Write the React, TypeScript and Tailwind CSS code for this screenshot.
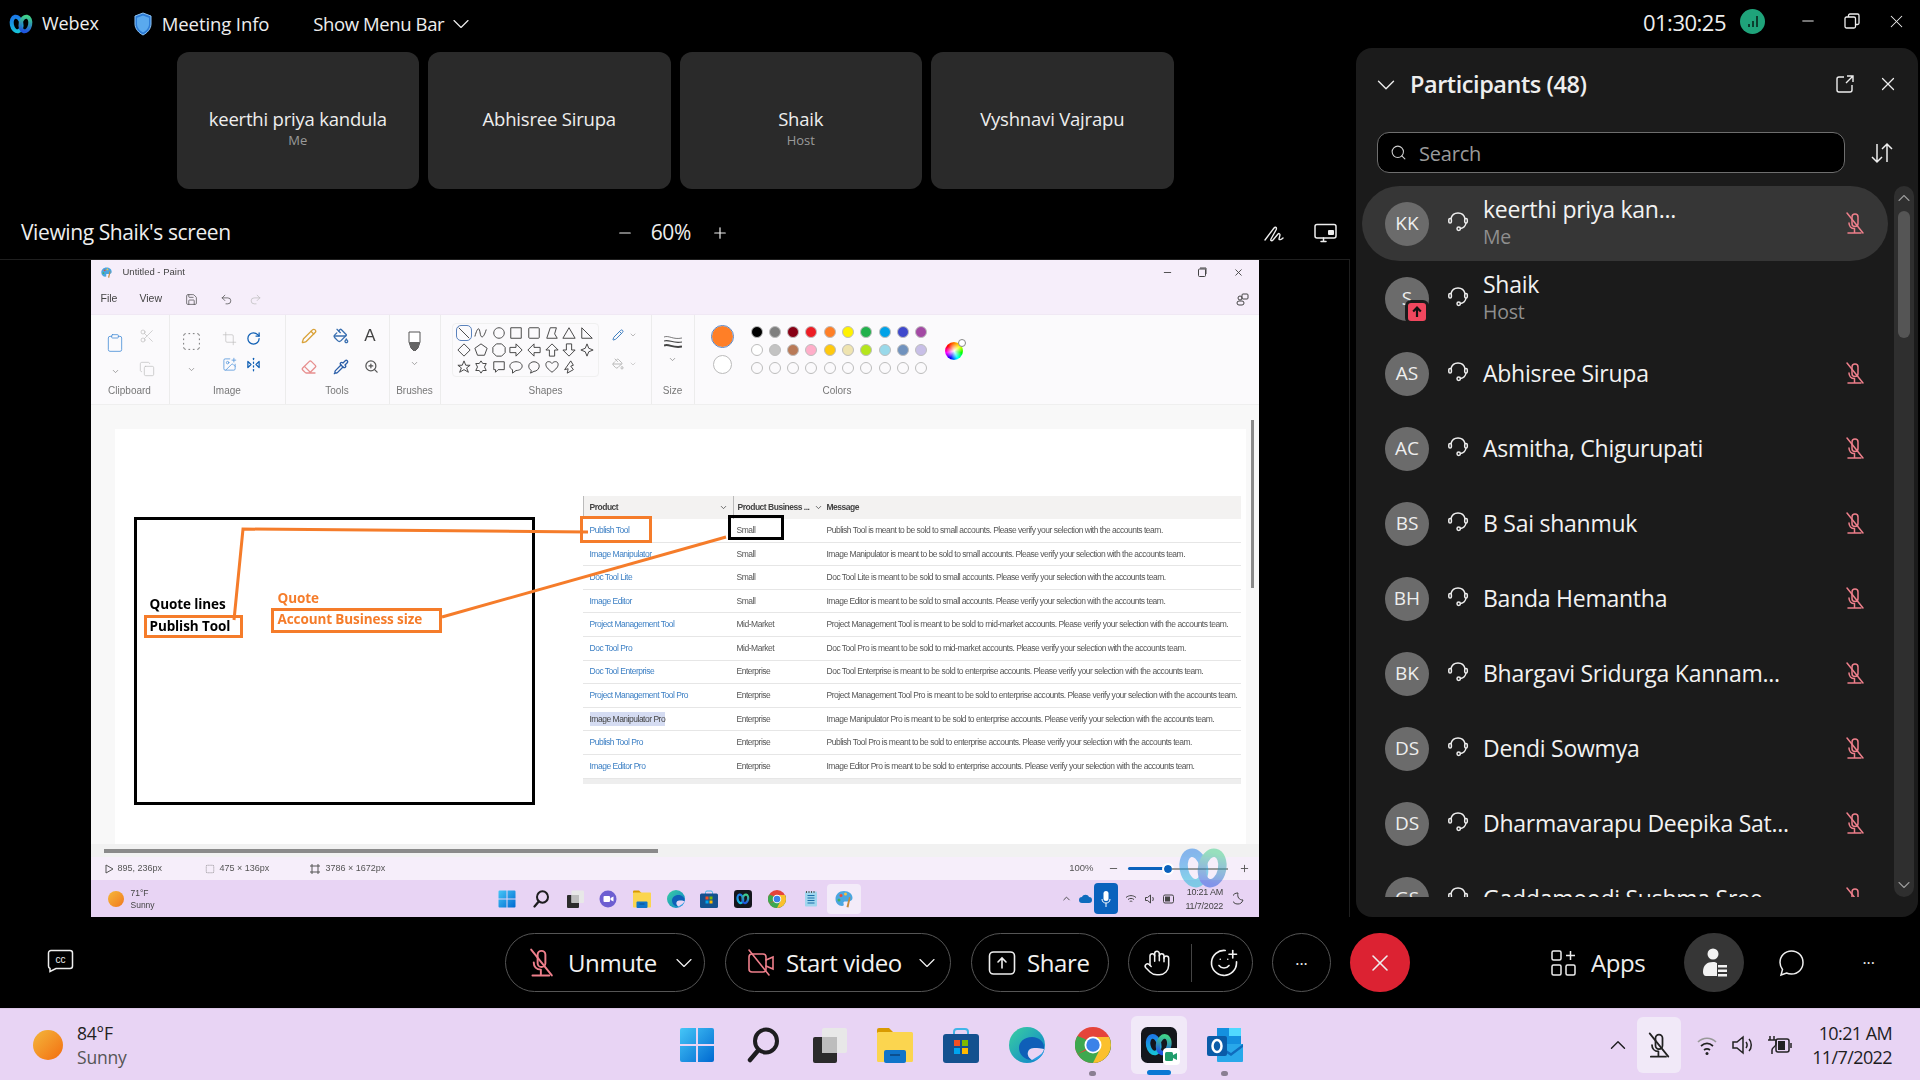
import { Clipboard, Copy, Crop, Eraser, Hand, PaintBucket, Pencil, Pipette, Redo2, Save, Scissors, SmilePlus, SquareDashed, Undo2, ZoomIn, ChevronDown, ChevronUp, X, Minus, Plus, Search, ImagePlus, RotateCw, FlipHorizontal2 } from "lucide-react";

const ui = "font-['Open_Sans','Noto_Sans',sans-serif]";
const paintFont = "font-['Liberation_Sans',Arial,sans-serif]";

function WebexLogo({ size = 20 }: { size?: number }) {
  return (
    <svg width={size} height={size} viewBox="0 0 24 20" fill="none">
      <defs>
        <linearGradient id="wxa" x1="0" y1="0" x2="0" y2="1">
          <stop offset="0" stopColor="#1c7be8" />
          <stop offset="1" stopColor="#16c0d8" />
        </linearGradient>
        <linearGradient id="wxb" x1="0" y1="0" x2="0" y2="1">
          <stop offset="0" stopColor="#3fd08a" />
          <stop offset="1" stopColor="#1f55e0" />
        </linearGradient>
      </defs>
      <ellipse cx="7.600" cy="10" rx="4.800" ry="7.400" transform="rotate(-12 7.600 10)" stroke="url(#wxa)" strokeWidth="4" />
      <ellipse cx="16.400" cy="10" rx="4.800" ry="7.400" transform="rotate(12 16.400 10)" stroke="url(#wxb)" strokeWidth="4" />
    </svg>
  );
}

function MicOffPink({ size = 24, color = "#ee7f8b" }: { size?: number; color?: string }) {
  return (
    <svg width={size} height={size} viewBox="0 0 24 24" fill="none" stroke={color} strokeWidth="1.500" strokeLinecap="round">
      <path d="M9 6a3 3 0 0 1 6 0v6.500a3 3 0 0 1-6 0z" />
      <path d="M4 2l16 20" />
      <path d="M6 12c0 3 2 5.500 5.500 5.500M11.500 17.500V21M5 22h13" />
    </svg>
  );
}

function Headset() {
  return (
    <svg width="24" height="24" viewBox="0 0 24 24" fill="none" stroke="#eeeeee" strokeWidth="1.500" strokeLinecap="round">
      <path d="M5 10.500a7.200 7.200 0 0 1 14 0" />
      <rect x="2.800" y="10.500" width="2.600" height="4.500" rx="1.300" />
      <rect x="18.700" y="10.500" width="2.600" height="4.500" rx="1.300" />
      <path d="M20 15c-.5 3-2.500 5-5.500 5.500" />
      <circle cx="12.700" cy="20.700" r="1.700" />
    </svg>
  );
}

function WinLogo({ size = 36 }: { size?: number }) {
  return (
    <svg width={size} height={size} viewBox="0 0 36 36">
      <defs>
        <linearGradient id="wn" x1="0" y1="0" x2="1" y2="1">
          <stop offset="0" stopColor="#45c6f7" />
          <stop offset="1" stopColor="#0069d1" />
        </linearGradient>
      </defs>
      <path d="M1 3a2 2 0 0 1 2-2h14v16H1zM19 1h14a2 2 0 0 1 2 2v14H19zM1 19h16v16H3a2 2 0 0 1-2-2zM19 19h16v14a2 2 0 0 1-2 2H19z" fill="url(#wn)" />
    </svg>
  );
}

function SearchGlass({ size = 36 }: { size?: number }) {
  return (
    <svg width={size} height={size} viewBox="0 0 36 36" fill="none" stroke="#1d1d1f" strokeLinecap="round">
      <ellipse cx="21" cy="14" rx="11" ry="11.500" strokeWidth="4" />
      <path d="M13.500 23L5 33" strokeWidth="4.500" />
    </svg>
  );
}

function TaskView({ size = 36 }: { size?: number }) {
  return (
    <svg width={size} height={size} viewBox="0 0 36 36">
      <rect x="2" y="10" width="24" height="26" rx="2" fill="#2b2b2b" />
      <rect x="11" y="1" width="25" height="25" rx="2" fill="#e8e8e8" />
      <rect x="11" y="10" width="15" height="16" fill="#bdbdbd" />
    </svg>
  );
}

function Files({ size = 36 }: { size?: number }) {
  return (
    <svg width={size} height={size} viewBox="0 0 36 36">
      <path d="M0 3a2 2 0 0 1 2-2h10l5 5h-17z" fill="#d99a00" />
      <rect y="5" width="36" height="30" rx="1.500" fill="#fbd54f" />
      <rect x="7" y="23" width="22" height="13" rx="2" fill="#0f74c9" />
      <rect x="13" y="27" width="10" height="2" fill="#0b4f8f" />
    </svg>
  );
}

function Store({ size = 36 }: { size?: number }) {
  return (
    <svg width={size} height={size} viewBox="0 0 36 36">
      <path d="M11 8V5a3 3 0 0 1 3-3h8a3 3 0 0 1 3 3v3" fill="none" stroke="#40b5e8" strokeWidth="2" />
      <rect y="7" width="36" height="29" rx="3" fill="#14518f" />
      <rect x="11" y="13" width="6" height="6" fill="#f25022" />
      <rect x="19" y="13" width="6" height="6" fill="#7fba00" />
      <rect x="11" y="21" width="6" height="6" fill="#00a4ef" />
      <rect x="19" y="21" width="6" height="6" fill="#ffb900" />
    </svg>
  );
}

function Edge({ size = 36 }: { size?: number }) {
  return (
    <svg width={size} height={size} viewBox="0 0 36 36">
      <defs>
        <linearGradient id="ed" x1="0" y1="0" x2="1" y2="1">
          <stop offset="0" stopColor="#3ad0a0" />
          <stop offset="1" stopColor="#0c7fd0" />
        </linearGradient>
      </defs>
      <circle cx="18" cy="18" r="18" fill="url(#ed)" />
      <path d="M35 22c1-7-5-12-12-12-8 0-13 5-13 11 0 6 5 12 13 12-3-2-5-5-4-8 1-4 5-4 9-4 3 0 5 1 7 1z" fill="#0f5fb8" />
      <path d="M35 22c-2 0-4-1-7-1-4 0-8 0-9 4-1 3 1 6 4 8 5 0 10-4 12-11z" fill="#e8d4f4" />
      <path d="M23 33c5 1 10-3 12-9-3 4-8 6-12 9z" fill="#2a9ee3" />
    </svg>
  );
}

function Chrome({ size = 36 }: { size?: number }) {
  return (
    <svg width={size} height={size} viewBox="0 0 36 36">
      <circle cx="18" cy="18" r="18" fill="#e5443a" />
      <path d="M18 18L2.400 27A18 18 0 0 1 2.400 9L10 12z" fill="#3ea84f" />
      <path d="M2.400 27L10 24l8-6 8 0 8.200-8A18 18 0 0 1 18 36 18 18 0 0 1 2.400 27z" fill="#3ea84f" />
      <path d="M18 36a18 18 0 0 0 16-26H18l8 10z" fill="#fbc02d" />
      <circle cx="18" cy="18" r="8.500" fill="#fff" />
      <circle cx="18" cy="18" r="6.700" fill="#3b82e8" />
    </svg>
  );
}

function WebexTile({ size = 36 }: { size?: number }) {
  return (
    <div className="flex items-center justify-center rounded-[18%] bg-[#14161c]" style={{ width: size, height: size }}>
      <WebexLogo size={size * 0.76} />
    </div>
  );
}

function Outlook({ size = 36 }: { size?: number }) {
  return (
    <svg width={size} height={size} viewBox="0 0 36 36">
      <rect x="10" y="1" width="24" height="16" fill="#1490df" />
      <rect x="22" y="1" width="12" height="8" fill="#50d9ff" />
      <path d="M10 17h26v17a1 1 0 0 1-1 1H11a1 1 0 0 1-1-1z" fill="#28a8ea" />
      <path d="M10 17l14 9 12-9v3L24 29 10 20z" fill="#0f6cbd" />
      <rect y="9" width="20" height="20" rx="2" fill="#0a5ca8" />
      <ellipse cx="10" cy="19" rx="4.500" ry="6" fill="none" stroke="#fff" strokeWidth="2.500" />
    </svg>
  );
}

function Notepad({ size = 36 }: { size?: number }) {
  return (
    <svg width={size} height={size} viewBox="0 0 36 36">
      <rect x="6" y="3" width="24" height="30" rx="2" fill="#9fd6ee" />
      <path d="M11 11h14M11 16h14M11 21h14M11 26h14" stroke="#1a6fa8" strokeWidth="2" />
      <path d="M9 2v4M14 2v4M19 2v4M24 2v4" stroke="#555" strokeWidth="2" />
    </svg>
  );
}

function PaintIcon({ size = 36 }: { size?: number }) {
  return (
    <svg width={size} height={size} viewBox="0 0 36 36">
      <path d="M18 2C8 2 1 9 1 18c0 8 6 14 13 14 4 0 4-3 3-5-1-3 1-4 4-4h5c5 0 9-3 9-7C35 8 28 2 18 2z" fill="#4aa6e0" />
      <circle cx="12" cy="11" r="3" fill="#e94c3d" />
      <circle cx="21" cy="8" r="3" fill="#f5c242" />
      <circle cx="8" cy="20" r="3" fill="#43b05c" />
      <path d="M28 14l-5 20 4 1 4-20z" fill="#c58a3d" />
    </svg>
  );
}

function TeamsChat({ size = 36 }: { size?: number }) {
  return (
    <svg width={size} height={size} viewBox="0 0 36 36">
      <circle cx="18" cy="18" r="17" fill="#6d5ed1" />
      <rect x="9" y="12" width="13" height="12" rx="2" fill="#fff" />
      <path d="M23 16l6-3v10l-6-3z" fill="#fff" />
    </svg>
  );
}

function TopBar() {
  return (
    <div className="flex h-[48px] items-center text-[#eeeeee]">
      <div className="ml-[9px]"><WebexLogo size={24} /></div>
      <span className="ml-[9px] mt-[-2px] text-[18px] tracking-[-0.1px]">Webex</span>
      <svg className="ml-[35px]" width="18" height="24" viewBox="0 0 18 24">
        <path d="M9 1l8 3v8c0 5-4 9-8 11-4-2-8-6-8-11V4z" fill="#2c7bd6" stroke="#8cc4f5" strokeWidth="1" />
        <path d="M9 3.500l6 2.200v6.300c0 4-3 7-6 8.500-3-1.500-6-4.500-6-8.500V5.700z" fill="#5aa9ee" />
      </svg>
      <span className="ml-[10px] text-[18.500px] tracking-[-0.1px]">Meeting Info</span>
      <span className="ml-[44px] text-[18.500px] tracking-[-0.4px]">Show Menu Bar</span>
      <ChevronDown className="ml-[3px]" size={28} strokeWidth={1} />
      <span className="ml-auto mt-[-3px] text-[22px] tracking-[-0.5px]">01:30:25</span>
      <div className="ml-[14px] mt-[-6px] flex h-[25px] w-[25px] items-end justify-center gap-[2px] rounded-full bg-[#1fa37a] pb-[7px]">
        <span className="h-[3px] w-[2px] bg-[#0b3d2e]" />
        <span className="h-[6px] w-[2px] bg-[#0b3d2e]" />
        <span className="h-[11px] w-[2px] bg-[#0b3d2e]" />
      </div>
      <Minus className="ml-[34px] mt-[-6px]" size={18} strokeWidth={1.300} />
      <svg className="ml-[27px] mt-[-6px]" width="16" height="16" viewBox="0 0 16 16" fill="none" stroke="#eeeeee" strokeWidth="1.300">
        <rect x="1" y="4" width="10.500" height="11" rx="1.500" />
        <path d="M4.500 4V2.500A1.500 1.500 0 0 1 6 1h7.500A1.500 1.500 0 0 1 15 2.500V10a1.500 1.500 0 0 1-1.500 1.500h-2" />
      </svg>
      <X className="ml-[26px] mr-[13px] mt-[-6px]" size={21} strokeWidth={1.200} />
    </div>
  );
}

function Tile({ name, sub }: { name: string; sub?: string }) {
  return (
    <div className="flex h-[137px] w-[242.500px] flex-col items-center rounded-xl bg-[#2a2a2a] pt-[55px]">
      <div className="text-[18.500px] leading-[24px] tracking-[-0.2px] text-[#eeeeee]">{name}</div>
      {sub && <div className="text-[13px] leading-[18px] text-[#9a9a9a]">{sub}</div>}
    </div>
  );
}

function ViewingRow() {
  return (
    <div className="flex h-[70px] items-center pt-[18px] text-[#eeeeee]">
      <span className="ml-[21px] text-[21px] tracking-[-0.4px]">Viewing Shaik's screen</span>
      <Minus className="ml-[385px]" size={18} strokeWidth={1.600} />
      <span className="ml-[17px] text-[21px] tracking-[-0.4px]">60%</span>
      <Plus className="ml-[20px]" size={18} strokeWidth={1.600} />
      <svg className="ml-[535px]" width="22" height="18" viewBox="0 0 22 18" fill="none" stroke="#eeeeee" strokeWidth="1.400" strokeLinecap="round">
        <path d="M1 16L10 4c2-2 3 0 2 2l-5 9c-1 2 1 2 2 1l5-6c1-1 2 0 2 1l-1 4c0 1 2 1 4-1" />
      </svg>
      <svg className="ml-[28px]" width="24" height="20" viewBox="0 0 24 20" fill="none" stroke="#eeeeee" strokeWidth="1.500" strokeLinecap="round">
        <rect x="1" y="1.500" width="21" height="13.500" rx="2" />
        <path d="M7 18.500h5M9.500 15v3" />
        <rect x="14" y="7" width="6" height="5" fill="#eeeeee" stroke="none" rx="1" />
      </svg>
    </div>
  );
}

const tableRows = [
  ["Publish Tool", "Small", "Publish Tool is meant to be sold to small accounts. Please verify your selection with the accounts team."],
  ["Image Manipulator", "Small", "Image Manipulator is meant to be sold to small accounts. Please verify your selection with the accounts team."],
  ["Doc Tool Lite", "Small", "Doc Tool Lite is meant to be sold to small accounts. Please verify your selection with the accounts team."],
  ["Image Editor", "Small", "Image Editor is meant to be sold to small accounts. Please verify your selection with the accounts team."],
  ["Project Management Tool", "Mid-Market", "Project Management Tool is meant to be sold to mid-market accounts. Please verify your selection with the accounts team."],
  ["Doc Tool Pro", "Mid-Market", "Doc Tool Pro is meant to be sold to mid-market accounts. Please verify your selection with the accounts team."],
  ["Doc Tool Enterprise", "Enterprise", "Doc Tool Enterprise is meant to be sold to enterprise accounts. Please verify your selection with the accounts team."],
  ["Project Management Tool Pro", "Enterprise", "Project Management Tool Pro is meant to be sold to enterprise accounts. Please verify your selection with the accounts team."],
  ["Image Manipulator Pro", "Enterprise", "Image Manipulator Pro is meant to be sold to enterprise accounts. Please verify your selection with the accounts team."],
  ["Publish Tool Pro", "Enterprise", "Publish Tool Pro is meant to be sold to enterprise accounts. Please verify your selection with the accounts team."],
  ["Image Editor Pro", "Enterprise", "Image Editor Pro is meant to be sold to enterprise accounts. Please verify your selection with the accounts team."],
];

function PasteTable() {
  return (
    <div className="ml-[48px] mt-[67px] w-[658px] shrink-0 text-[8.500px] tracking-[-0.49px] text-[#555]">
      <div className="flex h-[23px] items-center whitespace-nowrap bg-[#f3f2f1] font-bold text-[#444]">
        <div className="flex h-full w-[150px] shrink-0 items-center justify-between border-l border-[#bbb] pl-[6px] pr-[5px]">
          Product <ChevronDown size={9} />
        </div>
        <div className="flex h-full w-[94px] shrink-0 items-center border-l border-[#bbb] pl-[4px]">
          Product Business ... <ChevronDown className="ml-[5px]" size={9} />
        </div>
        <div>Message</div>
      </div>
      {tableRows.map(([p, s, m]) => (
        <div key={p} className="flex h-[23.600px] items-center whitespace-nowrap border-b border-[#e6e6e6]">
          <div className="w-[150px] shrink-0 pl-[7px]">
            <span className={p === "Image Manipulator Pro" ? "bg-[#d5dcf2] py-[2px] text-[#444]" : "text-[#3b7fc4]"}>{p}</span>
          </div>
          <div className="w-[94px] shrink-0 pl-[4px]">{s}</div>
          <div>{m}</div>
        </div>
      ))}
      <div className="h-[5px] bg-[#eeeeee]" />
    </div>
  );
}

function Annotations() {
  const f = "font-['Open_Sans',sans-serif] text-[13.500px] font-bold tracking-[-0.1px]";
  return (
    <>
      <div className={`absolute left-[35px] top-[167px] leading-[16px] text-black ${f}`}>Quote lines</div>
      <div className={`absolute left-[29px] top-[186px] h-[23px] w-[99px] border-[3px] border-[#f57c2a] pl-[3px] leading-[17px] text-black ${f}`}>Publish Tool</div>
      <div className={`absolute left-[163px] top-[161px] leading-[16px] text-[#f57c2a] ${f}`}>Quote</div>
      <div className={`absolute left-[156px] top-[179px] h-[25px] w-[171px] border-[3px] border-[#f57c2a] pl-[4px] leading-[16px] text-[#f57c2a] ${f}`}>Account Business size</div>
      <div className="absolute left-[465px] top-[87px] h-[27px] w-[72px] border-[3px] border-[#f57c2a]" />
      <div className="absolute left-[613px] top-[86px] h-[25px] w-[56px] border-[3px] border-black" />
      <svg className="absolute inset-0 h-full w-full" fill="none" stroke="#f57c2a" strokeWidth="3">
        <path d="M119 191L128 100L473 103" />
        <path d="M327 188L611 108" />
      </svg>
    </>
  );
}

function Group({ label, width, children }: { label: string; width: number; children: React.ReactNode }) {
  return (
    <div className="relative h-full shrink-0 border-r border-[#ececec]" style={{ width }}>
      {children}
      <div className="absolute bottom-[6px] left-0 right-0 text-center text-[10px] text-[#777]">{label}</div>
    </div>
  );
}

const shapeIcons = [
  "M2 2L14 14", "M1 12C4 1 6 1 7 8s4 6 7-4", "M8 2a6 6 0 1 0 .01 0z", "M2 2h12v12H2z", "M3 2h10a1 1 0 0 1 1 1v10a1 1 0 0 1-1 1H3a1 1 0 0 1-1-1V3a1 1 0 0 1 1-1z", "M6 2h7l-2 7 3 5H2z", "M8 2l7 12H1z", "M2 2l12 12H2z",
  "M8 1l7 7-7 7-7-7z", "M8 1l7 5-3 8H4L1 6z", "M5 1h6l4 4v6l-4 4H5l-4-4V5z", "M1 5h7V1l7 7-7 7v-4H1z", "M15 5H8V1L1 8l7 7v-4h7z", "M5 15V8H1l7-7 7 7h-4v7z", "M5 1v7H1l7 7 7-7h-4V1z", "M8 1l2 5 5 2-5 2-2 5-2-5-5-2 5-2z",
  "M8 1l2 5h5l-4 3 2 5-5-3-5 3 2-5-4-3h5z", "M8 1l2 3h4l-2 4 2 4h-4l-2 3-2-3H2l2-4-2-4h4z", "M2 2h12v9H7l-3 3v-3H2z", "M8 2c4 0 7 2 7 5s-3 5-7 5l-4 3v-4C2 10 1 9 1 7c0-3 3-5 7-5z", "M8 2c3 0 6 2 6 5s-3 6-6 6l-4 2 1-3C3 11 2 9 2 7c0-3 3-5 6-5z", "M8 14C3 10 1 8 1 5c0-4 5-4 7-1 2-3 7-3 7 1 0 3-2 5-7 9z", "M10 1l3 5-3 1 3 4-7 4 1-5-4 1z",
];

const colorRows = [
  ["#000000", "#7f7f7f", "#880015", "#ed1c24", "#ff7f27", "#fff200", "#22b14c", "#00a2e8", "#3f48cc", "#a349a4"],
  ["#ffffff", "#c3c3c3", "#b97a57", "#ffaec9", "#ffc90e", "#efe4b0", "#b5e61d", "#99d9ea", "#7092be", "#c8bfe7"],
  ["#fbfafc", "#fbfafc", "#fbfafc", "#fbfafc", "#fbfafc", "#fbfafc", "#fbfafc", "#fbfafc", "#fbfafc", "#fbfafc"],
];

function Ribbon() {
  const ic = "text-[#555]";
  const dim = "text-[#b9b9b9]";
  return (
    <div className={`flex h-[90px] items-stretch border-b border-[#efefef] bg-[#fbfafc] ${paintFont}`}>
      <Group label="Clipboard" width={79}>
        <div className="grid grid-cols-2 gap-y-[14px] pl-[14px] pt-[13px]">
          <Clipboard className="mt-[5px] text-[#4a90d9]" size={20} strokeWidth={1} />
          <Scissors className={`ml-[2px] ${dim}`} size={16} strokeWidth={1} />
          <ChevronDown className="ml-[6px] text-[#888]" size={9} />
          <Copy className={`-mt-[6px] ml-[2px] ${dim}`} size={16} strokeWidth={1} />
        </div>
      </Group>
      <Group label="Image" width={116}>
        <div className="grid grid-cols-3 gap-y-[11px] pl-[11px] pt-[16px]">
          <SquareDashed className="text-[#666]" size={21} strokeWidth={1} />
          <Crop className={`ml-[7px] ${dim}`} size={15} strokeWidth={1} />
          <RotateCw className="ml-[-4px] text-[#0f5fb4]" size={15} />
          <ChevronDown className="ml-[6px] mt-[2px] text-[#888]" size={9} />
          <ImagePlus className="ml-[7px] -mt-[6px] text-[#4a90d9]" size={15} strokeWidth={1.200} />
          <FlipHorizontal2 className="ml-[-4px] -mt-[6px] text-[#0f5fb4]" size={15} />
        </div>
      </Group>
      <Group label="Tools" width={104}>
        <div className="grid grid-cols-3 gap-y-[15px] pl-[15px] pt-[13px]">
          <Pencil className="text-[#d9a23a]" size={16} />
          <PaintBucket className="ml-[3px] text-[#3a6fb0]" size={16} />
          <span className="ml-[5px] text-[17px] leading-[16px] text-[#444]">A</span>
          <Eraser className="text-[#e78f8f]" size={16} />
          <Pipette className="ml-[3px] text-[#2b5ea8]" size={16} />
          <ZoomIn className={`ml-[5px] ${ic}`} size={15} />
        </div>
      </Group>
      <Group label="Brushes" width={51}>
        <div className="flex flex-col items-center pt-[16px]">
          <svg width="13" height="20" viewBox="0 0 13 20">
            <path d="M1 1h11v10l-2 6-3 3H6l-3-3-2-6z" fill="#fff" stroke="#555" />
            <path d="M1 11h11l-2 6-3 3H6l-3-3z" fill="#666" />
          </svg>
          <ChevronDown className="mt-[8px] text-[#888]" size={9} />
        </div>
      </Group>
      <Group label="Shapes" width={211}>
        <div className="ml-[11px] mt-[8px] flex w-[195px]">
          <div className="grid h-[54px] w-[147px] grid-cols-8 content-center gap-y-[3px] rounded border border-[#f0f0f0] pl-[4px]">
            {shapeIcons.map((d, i) => (
              <svg key={i} width="14" height="14" viewBox="0 0 16 16" fill="none" stroke="#444" strokeWidth="1.100" className={i === 0 ? "rounded-sm outline outline-1 outline-[#5b83bd]" : ""}>
                <path d={d} />
              </svg>
            ))}
          </div>
          <div className="ml-[13px] mt-[6px] flex flex-col gap-[17px]">
            <div className="flex items-center gap-[5px]"><Pencil className="text-[#3f7fc0]" size={12} /><ChevronDown className="text-[#999]" size={8} /></div>
            <div className="flex items-center gap-[5px]"><PaintBucket className={dim} size={12} /><ChevronDown className="text-[#bbb]" size={8} /></div>
          </div>
        </div>
      </Group>
      <Group label="Size" width={43}>
        <div className="flex flex-col items-center pt-[20px]">
          <svg width="18" height="14" viewBox="0 0 18 14" fill="none" stroke="#444">
            <path d="M0 2c5-2 9 3 18 1" strokeWidth=".7" />
            <path d="M0 6c5-2 9 3 18 1" strokeWidth="1.100" />
            <path d="M0 10.500c5-2 9 3 18 1" strokeWidth="2" />
          </svg>
          <ChevronDown className="mt-[6px] text-[#888]" size={9} />
        </div>
      </Group>
      <div className="relative w-[564px]">
        <div className="absolute bottom-[6px] left-[128px] text-[10px] text-[#777]">Colors</div>
        <div className="flex pt-[11px]">
          <div className="ml-[17px] flex flex-col items-center">
            <span className="h-[21px] w-[21px] rounded-full border-2 border-[#ff7f27] bg-[#ff7f27] outline outline-1 outline-[#5b83bd]" />
            <span className="mt-[8px] h-[19px] w-[19px] rounded-full border border-[#bbb] bg-white" />
          </div>
          <div className="ml-[18px] flex flex-col gap-[6px]">
            {colorRows.map((row, r) => (
              <div key={r} className="flex gap-[6.300px]">
                {row.map((c, i) => (
                  <span key={i} className="h-[12px] w-[12px] rounded-full border border-[#bdbdbd]" style={{ backgroundColor: c }} />
                ))}
              </div>
            ))}
          </div>
          <span className="relative ml-[18px] mt-[16px] h-[18px] w-[18px] rounded-full bg-[radial-gradient(circle,#ffffff_0%,#ffffff00_60%),conic-gradient(#ff7f00,#ffff00,#00ff00,#00ffff,#0000ff,#ff00ff,#ff0000,#ff7f00)]">
            <span className="absolute right-[-3px] top-[-3px] h-[8px] w-[8px] rounded-full border border-[#888] bg-white" />
          </span>
        </div>
      </div>
    </div>
  );
}

function MiniTaskbar() {
  const icons = [WinLogo, SearchGlass, TaskView, TeamsChat, Files, Edge, Store, WebexTile, Chrome, Notepad, PaintIcon];
  return (
    <div className={`flex h-[37px] items-center bg-[#e8d4f4] ${paintFont}`}>
      <div className="ml-[17px] h-[16px] w-[16px] shrink-0 rounded-full bg-gradient-to-br from-[#f5b83a] to-[#f0781e]" />
      <div className="ml-[7px] w-[360px] shrink-0 text-[8.500px] leading-[12px] text-[#444]">
        <div>71°F</div>
        <div>Sunny</div>
      </div>
      {icons.map((Icon, i) => (
        <div key={i} className={`flex h-[30px] w-[33.700px] shrink-0 items-center justify-center rounded-sm ${i === 10 ? "bg-[#f3ebf9]" : ""}`}>
          <Icon size={18} />
        </div>
      ))}
      <div className="ml-[200px] flex shrink-0 items-center text-[#444]">
        <ChevronUp size={11} />
        <svg className="ml-[7px]" width="13" height="9" viewBox="0 0 13 9"><path d="M3 9a3 3 0 0 1 0-6c1-3 6-3 7 0a3 3 0 0 1 0 6z" fill="#0f6cbd" /></svg>
        <div className="ml-[2px] flex h-[31px] w-[24px] items-center justify-center rounded-sm bg-[#0a62bd]">
          <svg width="10" height="16" viewBox="0 0 10 16"><rect x="2.500" width="5" height="10" rx="2.500" fill="#fff" /><path d="M1 8c0 3 2 4 4 4s4-1 4-4M5 12v4" stroke="#fff" fill="none" /></svg>
        </div>
      </div>
      <div className="ml-[7px] flex shrink-0 items-center gap-[7px] text-[#444]">
        <svg width="12" height="12" viewBox="0 0 24 24" fill="none" stroke="#444" strokeWidth="2"><path d="M2 9c6-5 14-5 20 0M6 13c4-3 8-3 12 0M9.500 17c2-1 3-1 5 0" /></svg>
        <svg width="12" height="12" viewBox="0 0 24 24" fill="none" stroke="#444" strokeWidth="2"><path d="M3 9h4l6-5v16l-6-5H3zM17 8c2 2 2 6 0 8" /></svg>
        <svg width="13" height="10" viewBox="0 0 13 10"><rect x=".5" y="1" width="10" height="8" rx="1.500" fill="none" stroke="#444" /><rect x="2" y="2.500" width="5" height="5" fill="#444" /></svg>
      </div>
      <div className="ml-[5px] w-[42px] shrink-0 whitespace-nowrap text-right text-[9px] leading-[14px] tracking-[-0.2px] text-[#444]">
        <div>10:21 AM</div>
        <div>11/7/2022</div>
      </div>
      <svg className="ml-[10px] shrink-0" width="11" height="13" viewBox="0 0 11 13" fill="none" stroke="#444"><path d="M5 1c-1 4 1 7 5 7-1 3-3 4-5 4a5 5 0 0 1-1-11z" /></svg>
    </div>
  );
}

function PaintWindow() {
  return (
    <div className={`h-[657px] w-[1168px] overflow-hidden bg-white blur-[0.35px] ${paintFont}`}>
      <div className="flex h-[24px] items-center bg-[#f6eefa] text-[#444]">
        <div className="ml-[10px]"><PaintIcon size={11} /></div>
        <span className="ml-[11px] text-[9.500px]">Untitled - Paint</span>
        <Minus className="ml-auto" size={11} />
        <svg className="ml-[25px]" width="9" height="10" viewBox="0 0 9 10" fill="none" stroke="#444"><rect x=".5" y="2" width="7" height="7.500" rx="1" /><path d="M2 1h6v6" /></svg>
        <X className="ml-[26px] mr-[15px]" size={11} />
      </div>
      <div className="flex h-[31px] items-center border-b border-[#f0e8f4] bg-[#f6eefa] text-[10.500px] text-[#444]">
        <span className="ml-[10px]">File</span>
        <span className="ml-[22px]">View</span>
        <Save className="ml-[23px]" size={13} strokeWidth={1.300} />
        <Undo2 className="ml-[22px]" size={13} strokeWidth={1.300} />
        <Redo2 className="ml-[16px] text-[#bbb]" size={13} strokeWidth={1.300} />
        <svg className="ml-auto mr-[10px]" width="13" height="13" viewBox="0 0 13 13" fill="none" stroke="#444"><rect x="6" y="1" width="6" height="5" rx="1" /><circle cx="4" cy="5" r="2" /><rect x="1" y="8" width="7" height="4" rx="2" /></svg>
      </div>
      <Ribbon />
      <div className="flex h-[439px] bg-[#f8f8f8] pl-[24px] pt-[24px]">
        <div className="relative flex h-[415px] w-[1131px] bg-white">
          <div className="ml-[19px] mt-[88px] h-[288px] w-[401px] shrink-0 border-[3px] border-black" />
          <PasteTable />
          <Annotations />
        </div>
        <div className="ml-[5px] mt-[-9px] h-[168px] w-[3px] bg-[#8a8a8a]" />
      </div>
      <div className="flex h-[13px] items-center bg-[#f1f1f1] pl-[13px]">
        <div className="h-[4px] w-[554px] bg-[#8a8a8a]" />
      </div>
      <div className="relative flex h-[23px] items-center bg-[#f6eefa] text-[9px] text-[#555]">
        <svg className="ml-[14px]" width="9" height="10" viewBox="0 0 9 10" fill="none" stroke="#555"><path d="M1 1v8l7-4z" /></svg>
        <span className="ml-[4px] w-[79px]">895, 236px</span>
        <SquareDashed className="ml-[8px]" size={10} strokeWidth={1.300} />
        <span className="ml-[5px] w-[82px]">475 × 136px</span>
        <svg className="ml-[8px]" width="10" height="10" viewBox="0 0 10 10" fill="none" stroke="#555"><path d="M2 0v10M8 0v10M0 2h10M0 8h10" /></svg>
        <span className="ml-[6px]">3786 × 1672px</span>
        <span className="ml-auto text-[9.500px]">100%</span>
        <Minus className="ml-[14px]" size={11} />
        <div className="ml-[9px] flex w-[100px] items-center">
          <span className="h-[3px] w-[36px] rounded-l bg-[#0a62bd]" />
          <span className="h-[8px] w-[8px] rounded-full bg-[#0a62bd] outline outline-2 outline-white" />
          <span className="h-[2px] w-[56px] bg-[#999]" />
        </div>
        <Plus className="ml-[11px] mr-[9px]" size={11} />
        <div className="absolute left-[1087px] top-[-14px] opacity-50"><WebexLogo size={50} /></div>
      </div>
      <MiniTaskbar />
    </div>
  );
}

const people = [
  { i: "KK", n: "keerthi priya kan...", s: "Me", on: true },
  { i: "S", n: "Shaik", s: "Host", host: true },
  { i: "AS", n: "Abhisree Sirupa" },
  { i: "AC", n: "Asmitha, Chigurupati" },
  { i: "BS", n: "B Sai shanmuk" },
  { i: "BH", n: "Banda Hemantha" },
  { i: "BK", n: "Bhargavi Sridurga Kannam..." },
  { i: "DS", n: "Dendi Sowmya" },
  { i: "DS", n: "Dharmavarapu Deepika Sat..." },
  { i: "GS", n: "Gaddamoodi Sushma Sree..." },
];

function ParticipantRow({ p }: { p: (typeof people)[number] }) {
  return (
    <div className={`flex h-[75px] shrink-0 items-center rounded-full pl-[23px] ${p.on ? "bg-[#363636]" : ""}`}>
      <div className="relative flex h-[44px] w-[44px] shrink-0 items-center justify-center rounded-full bg-[#6b6b6b] text-[19px] text-[#eeeeee]">
        {p.i}
        {p.host && (
          <span className="absolute bottom-[-3px] right-0 flex h-[24px] w-[24px] items-center justify-center rounded-md border-[3px] border-[#1b1b1b] bg-[#f0475e]">
            <svg width="12" height="12" viewBox="0 0 11 11" fill="none" stroke="#111" strokeWidth="2"><path d="M5.500 10V2M2 5l3.500-3.500L9 5" /></svg>
          </span>
        )}
      </div>
      <div className="ml-[17px] mt-[-8px] shrink-0"><Headset /></div>
      <div className={`ml-[13px] flex-1 ${p.s ? "mt-[-3px]" : "mt-[-1px]"}`}>
        <div className="text-[23px] leading-[30px] tracking-[-0.25px] text-[#f2f2f2]">{p.n}</div>
        {p.s && <div className="text-[19.500px] leading-[26px] tracking-[-0.2px] text-[#8f8f8f]">{p.s}</div>}
      </div>
      {!p.host && <div className="mr-[21px] mt-[-2px]"><MicOffPink /></div>}
    </div>
  );
}

function ParticipantsPanel() {
  return (
    <div className="ml-[6px] flex h-[869px] w-[562px] flex-col rounded-2xl bg-[#1b1b1b]">
      <div className="flex h-[74px] shrink-0 items-center text-[#eeeeee]">
        <ChevronDown className="ml-[15px]" size={30} strokeWidth={1.100} />
        <span className="ml-[9px] text-[23.500px] font-semibold tracking-[-0.45px]">Participants (48)</span>
        <svg className="ml-auto mt-[-3px]" width="20" height="20" viewBox="0 0 20 20" fill="none" stroke="#eeeeee" strokeWidth="1.400">
          <path d="M9 3H4a2 2 0 0 0-2 2v11a2 2 0 0 0 2 2h11a2 2 0 0 0 2-2v-5M12 2h6v6M18 2l-7 7" />
        </svg>
        <X className="ml-[22px] mr-[19px] mt-[-3px]" size={22} strokeWidth={1.300} />
      </div>
      <div className="flex shrink-0 items-center pl-[21px]">
        <div className="mt-[10px] flex h-[41px] w-[468px] items-center rounded-xl border border-[#6e6e6e] bg-black">
          <Search className="ml-[12px] text-[#cfcfcf]" size={17} strokeWidth={1.500} />
          <span className="ml-[12px] pt-[3px] text-[20px] tracking-[-0.2px] text-[#9a9a9a]">Search</span>
        </div>
        <svg className="ml-[25px] mt-[10px]" width="24" height="22" viewBox="0 0 24 22" fill="none" stroke="#eeeeee" strokeWidth="1.500">
          <path d="M7 2v18M2 15l5 5 5-5M17 20V2M12 7l5-5 5 5" />
        </svg>
      </div>
      <div className="mt-[13px] flex min-h-0 flex-1 pl-[6px]">
        <div className="h-[711px] w-[526px] overflow-hidden">
          {people.map((p, i) => <ParticipantRow key={i} p={p} />)}
        </div>
        <div className="ml-[6px] flex h-[711px] w-[20px] flex-col items-center rounded-full bg-[#2f2f2f] text-[#9a9a9a]">
          <ChevronUp className="mt-[2px] shrink-0" size={20} strokeWidth={1.300} />
          <div className="mt-[3px] h-[127px] w-[12px] shrink-0 rounded-full bg-[#555555]" />
          <ChevronDown className="mb-[2px] mt-auto shrink-0" size={20} strokeWidth={1.300} />
        </div>
      </div>
    </div>
  );
}

function Caret() {
  return <ChevronDown size={28} strokeWidth={1} />;
}

function Toolbar() {
  const pill = "flex h-[59px] shrink-0 items-center rounded-full border border-[#555] text-[#f2f2f2]";
  const label = "text-[24px] font-medium tracking-[-0.4px]";
  return (
    <div className="flex h-[91px] items-center text-[#eeeeee]">
      <svg className="ml-[47px] mt-[-4px]" width="27" height="24" viewBox="0 0 27 24" fill="none" stroke="#eeeeee" strokeWidth="1.500">
        <path d="M4 1.500h19a2.500 2.500 0 0 1 2.500 2.500v13a2.500 2.500 0 0 1-2.500 2.500H9l-6 3v-3.100A2.500 2.500 0 0 1 1.500 17V4A2.500 2.500 0 0 1 4 1.500z" />
        <text x="13.500" y="14" textAnchor="middle" fontSize="10" fill="#eeeeee" stroke="none" fontFamily="Liberation Sans">cc</text>
      </svg>
      <div className={`${pill} ml-[431px] w-[200px] pl-[20px]`}>
        <MicOffPink size={31} />
        <span className={`${label} ml-[11px]`}>Unmute</span>
        <span className="ml-[13px]"><Caret /></span>
      </div>
      <div className={`${pill} ml-[20px] w-[226px] pl-[20px]`}>
        <svg width="31" height="31" viewBox="0 0 31 31" fill="none" stroke="#ee7f8b" strokeWidth="1.600" strokeLinecap="round">
          <rect x="3" y="7" width="17" height="18" rx="3" />
          <path d="M20 13l7-3v12l-7-3M3 3l20 25" />
        </svg>
        <span className={`${label} ml-[9px]`}>Start video</span>
        <span className="ml-[11px]"><Caret /></span>
      </div>
      <div className={`${pill} ml-[20px] w-[138px] pl-[16px]`}>
        <svg width="28" height="26" viewBox="0 0 28 26" fill="none" stroke="#eeeeee" strokeWidth="1.600" strokeLinecap="round">
          <rect x="1.500" y="2" width="25" height="22" rx="4" />
          <path d="M14 18V8M10 12l4-4 4 4" />
        </svg>
        <span className={`${label} ml-[11px]`}>Share</span>
      </div>
      <div className={`${pill} ml-[19px] w-[125px] pl-[14px]`}>
        <Hand size={28} strokeWidth={1.300} />
        <span className="ml-[20px] h-[38px] w-px bg-[#444]" />
        <SmilePlus className="ml-[17px]" size={30} strokeWidth={1.300} />
      </div>
      <div className={`${pill} ml-[19px] w-[59px] justify-center pb-[8px] text-[16px]`}>...</div>
      <div className="ml-[19px] flex h-[59px] w-[60px] shrink-0 items-center justify-center rounded-full bg-[#dc2232]">
        <X size={28} strokeWidth={1.300} />
      </div>
      <svg className="ml-[141px]" width="25" height="26" viewBox="0 0 25 26" fill="none" stroke="#eeeeee" strokeWidth="1.500">
        <rect x="1" y="1" width="9" height="9" rx="1.500" /><rect x="1" y="15" width="9" height="10" rx="1.500" /><rect x="15" y="15" width="9" height="10" rx="1.500" />
        <path d="M19.500 1v9M15 5.500h9" />
      </svg>
      <span className={`${label} ml-[15px]`}>Apps</span>
      <div className="ml-[39px] flex h-[59px] w-[60px] shrink-0 items-center justify-center rounded-full bg-[#363636]">
        <svg width="28" height="30" viewBox="0 0 28 30" fill="#f2f2f2">
          <circle cx="13" cy="6" r="5.500" />
          <path d="M3 24c0-7 4-10 10-10 2 0 3 .5 4 1v13H6c-2 0-3-2-3-4z" />
          <path d="M18 17h9v2.500h-9zM18 21.500h9V24h-9zM18 26h9v2.500h-9z" />
        </svg>
      </div>
      <svg className="ml-[34px]" width="27" height="28" viewBox="0 0 27 28" fill="none" stroke="#eeeeee" strokeWidth="1.500">
        <path d="M13.500 2C20 2 25 7 25 13.500S20 25 13.500 25c-2 0-3.500-.3-5-1L3 26l1.500-5.500C3 18.500 2 16 2 13.500 2 7 7 2 13.500 2z" />
      </svg>
      <span className="ml-[57px] pb-[10px] text-[16px]">...</span>
    </div>
  );
}

function Tray() {
  return (
    <div className="ml-auto flex items-center text-[#1d1d1f]">
      <ChevronUp size={26} strokeWidth={1.300} />
      <div className="ml-[6px] flex h-[56px] w-[44px] items-center justify-center rounded-md bg-[#f1e9f8]">
        <MicOffPink size={28} color="#222" />
      </div>
      <svg className="ml-[14px]" width="24" height="24" viewBox="0 0 24 24" fill="none" stroke="#222" strokeWidth="1.700"><path d="M3 9c5-5 13-5 18 0" stroke="#999" /><path d="M6 13c4-3.500 8-3.500 12 0M9 17c2-1.500 4-1.500 6 0" /><circle cx="12" cy="20.500" r="1.500" fill="#222" stroke="none" /></svg>
      <svg className="ml-[12px]" width="24" height="24" viewBox="0 0 24 24" fill="none" stroke="#222" strokeWidth="1.500"><path d="M2 9h4l6-5v16l-6-5H2zM15 9c1.500 2 1.500 4 0 6M18 6c3 3 3 9 0 12" /></svg>
      <svg className="ml-[11px]" width="26" height="24" viewBox="0 0 26 24" fill="none" stroke="#222" strokeWidth="1.500"><path d="M4 3v4M8 3v4M2 7h8v4c0 3-4 3-4 6v4" /><rect x="10" y="6" width="13" height="13" rx="2" /><rect x="12" y="8" width="7" height="9" fill="#222" stroke="none" /><path d="M25 10v5" /></svg>
      <div className="ml-[20px] mr-[28px] text-right text-[18px] leading-[24px] tracking-[-0.6px]">
        <div>10:21 AM</div>
        <div>11/7/2022</div>
      </div>
    </div>
  );
}

function Taskbar() {
  const apps = [WinLogo, SearchGlass, TaskView, Files, Store, Edge, Chrome, WebexTile, Outlook];
  return (
    <div className="flex h-[72px] items-center border-t border-[#dcc7e8] bg-[#e8d4f4]">
      <div className="ml-[33px] h-[30px] w-[30px] rounded-full bg-gradient-to-br from-[#f2b63a] to-[#f26c0c]" />
      <div className="ml-[14px] w-[586.500px] text-[17.500px] leading-[24px] tracking-[-0.2px]">
        <div className="text-[#222]">84°F</div>
        <div className="text-[#555]">Sunny</div>
      </div>
      {apps.map((Icon, i) => (
        <div key={i} className="relative flex h-[58px] w-[66px] items-center justify-center">
          {i === 7 && <div className="absolute inset-x-[5px] inset-y-0 rounded-md bg-[#f1e9f8]" />}
          <div className="relative">
            <Icon size={36} />
            {i === 7 && (
              <span className="absolute bottom-[-2px] right-[-3px] flex h-[17px] w-[17px] items-center justify-center rounded-sm bg-white">
                <svg width="12" height="9" viewBox="0 0 12 9"><rect width="8" height="9" rx="1.500" fill="#1f9d6b" /><path d="M8 3l4-2v7L8 6z" fill="#1f9d6b" /></svg>
              </span>
            )}
          </div>
          {(i === 6 || i === 8) && <span className="absolute bottom-[-2px] h-[5px] w-[7px] rounded-full bg-[#8a7f92]" />}
          {i === 7 && <span className="absolute bottom-[-1px] h-[5px] w-[24px] rounded-full bg-[#0a78d4]" />}
        </div>
      ))}
      <Tray />
    </div>
  );
}

export default function App() {
  return (
    <div className={`flex h-[1080px] w-[1920px] flex-col overflow-hidden bg-black ${ui}`}>
      <TopBar />
      <div className="flex h-[869px]">
        <div className="flex w-[1350px] shrink-0 flex-col">
          <div className="mt-[4px] flex justify-center gap-[9px]">
            <Tile name="keerthi priya kandula" sub="Me" />
            <Tile name="Abhisree Sirupa" />
            <Tile name="Shaik" sub="Host" />
            <Tile name="Vyshnavi Vajrapu" />
          </div>
          <ViewingRow />
          <div className="flex flex-1 justify-center border-r border-t border-[#1f1f1f]">
            <PaintWindow />
          </div>
        </div>
        <ParticipantsPanel />
      </div>
      <Toolbar />
      <Taskbar />
    </div>
  );
}
